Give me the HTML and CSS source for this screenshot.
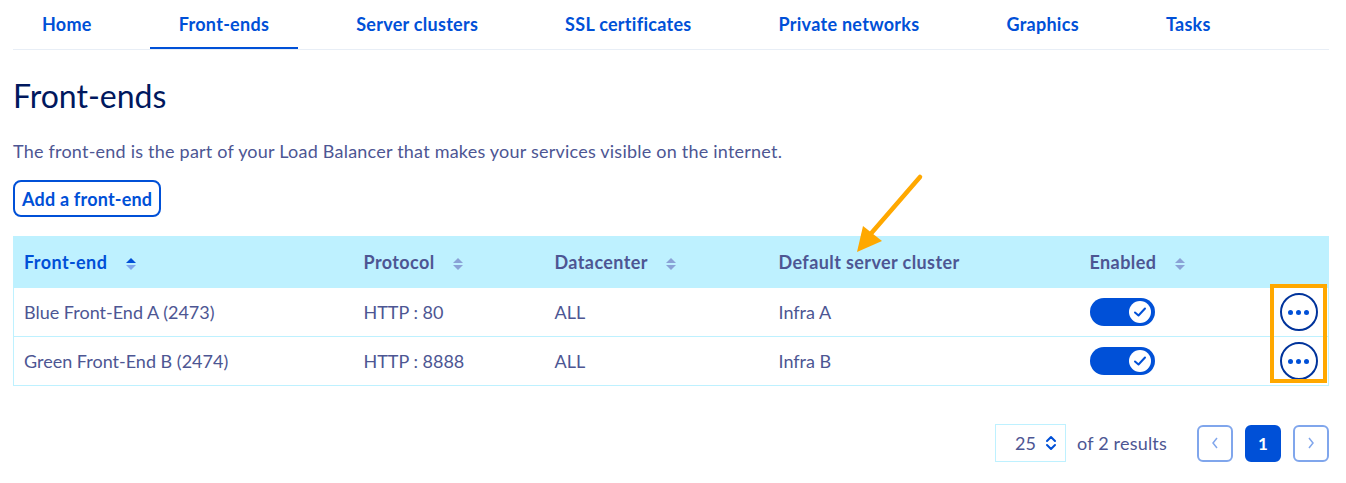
FILE: index.html
```html
<!DOCTYPE html>
<html lang="en">
<head>
  <meta charset="UTF-8" />
  <title>Front-ends</title>
  <link rel="stylesheet" href="styles.css">
</head>
<body>
  <div class="page">
    <!-- Tabs -->
    <nav class="tabs">
      <a class="tab">Home</a>
      <a class="tab active">Front-ends</a>
      <a class="tab">Server clusters</a>
      <a class="tab">SSL certificates</a>
      <a class="tab">Private networks</a>
      <a class="tab">Graphics</a>
      <a class="tab">Tasks</a>
    </nav>

    <h1 class="title">Front-ends</h1>
    <p class="intro">The front-end is the part of your Load Balancer that makes your services visible on the internet.</p>
    <button class="add-btn">Add a front-end</button>

    <!-- Table -->
    <div class="table-wrap">
      <table class="grid">
        <colgroup>
          <col style="width:340px"><col style="width:191px"><col style="width:224px">
          <col style="width:311px"><col style="width:189px"><col>
        </colgroup>
        <thead>
          <tr>
            <th class="sorted">Front-end <span class="sort"><i class="up"></i><i class="down"></i></span></th>
            <th>Protocol <span class="sort"><i class="up"></i><i class="down"></i></span></th>
            <th>Datacenter <span class="sort"><i class="up"></i><i class="down"></i></span></th>
            <th>Default server cluster</th>
            <th>Enabled <span class="sort"><i class="up"></i><i class="down"></i></span></th>
            <th></th>
          </tr>
        </thead>
        <tbody>
          <tr>
            <td>Blue Front-End A (2473)</td>
            <td>HTTP : 80</td>
            <td>ALL</td>
            <td>Infra A</td>
            <td><span class="toggle"><span class="knob"><svg width="14" height="12" viewBox="0 0 14 12"><path d="M2 6.5 L5.5 9.5 L12 2.5" fill="none" stroke="#0050d7" stroke-width="2" stroke-linecap="round" stroke-linejoin="round"/></svg></span></span></td>
            <td class="act"><span class="more"><i></i><i></i><i></i></span></td>
          </tr>
          <tr>
            <td>Green Front-End B (2474)</td>
            <td>HTTP : 8888</td>
            <td>ALL</td>
            <td>Infra B</td>
            <td><span class="toggle"><span class="knob"><svg width="14" height="12" viewBox="0 0 14 12"><path d="M2 6.5 L5.5 9.5 L12 2.5" fill="none" stroke="#0050d7" stroke-width="2" stroke-linecap="round" stroke-linejoin="round"/></svg></span></span></td>
            <td class="act"><span class="more"><i></i><i></i><i></i></span></td>
          </tr>
        </tbody>
      </table>
      <!-- annotations -->
      <div class="highlight"></div>
    </div>

    <!-- Pagination -->
    <div class="pager">
      <div class="per-page">25
        <svg width="12" height="16" viewBox="0 0 12 16"><path d="M2 6 L6 2 L10 6 M2 10 L6 14 L10 10" fill="none" stroke="#0050d7" stroke-width="2" stroke-linecap="round" stroke-linejoin="round"/></svg>
      </div>
      <span class="count">of 2 results</span>
      <div class="pages">
        <span class="pg"><svg width="8" height="12" viewBox="0 0 8 12"><path d="M6 1 L2 6 L6 11" fill="none" stroke="#80a6ec" stroke-width="1.5"/></svg></span>
        <span class="pg current">1</span>
        <span class="pg"><svg width="8" height="12" viewBox="0 0 8 12"><path d="M2 1 L6 6 L2 11" fill="none" stroke="#80a6ec" stroke-width="1.5"/></svg></span>
      </div>
    </div>
  </div>

  <svg class="arrow" width="100" height="100" viewBox="840 165 100 100">
    <line x1="920" y1="177" x2="868" y2="237" stroke="#ffa800" stroke-width="4.5" stroke-linecap="round"/>
    <polygon points="857,252 863,226 882,241" fill="#ffa800"/>
  </svg>
</body>
</html>
```

FILE: styles.css
```css
body {
  margin: 0;
  font-family: "Source Sans Pro", Lato, "Noto Sans", sans-serif;
  color: #4d5693;
  background: #fff;
}
.page {
  width: 1316px;
  padding-left: 13px;
}
/* Tabs */
.tabs {
  display: flex;
  gap: 29px;
  border-bottom: 1px solid #e8eef6;
  height: 49px;
}
.tab {
  padding: 0 29px;
  font-size: 18px;
  font-weight: 700;
  letter-spacing: 0.28px;
  color: #0050d7;
  line-height: 49px;
  height: 47px;
  border-bottom: 2px solid transparent;
}
.tab.active {
  border-bottom-color: #0050d7;
}
/* Heading */
.title {
  margin: 26px 0 0;
  font-size: 32px;
  font-weight: 400;
  color: #00185e;
  line-height: 40px;
}
.intro {
  margin: 23px 0 0;
  font-size: 18px;
  letter-spacing: 0.22px;
  line-height: 24px;
}
.add-btn {
  margin-top: 17px;
  height: 37px;
  padding: 0 7px;
  border: 2px solid #0050d7;
  border-radius: 8px;
  background: #fff;
  color: #0050d7;
  font: 700 18px "Source Sans Pro", Lato, "Noto Sans", sans-serif;
  letter-spacing: 0.2px;
}
/* Table */
.table-wrap {
  position: relative;
  margin-top: 19px;
}
.grid {
  width: 100%;
  border-collapse: collapse;
  table-layout: fixed;
  border: 1px solid #bef1ff;
  font-size: 18px;
}
.grid th {
  background: #bef1ff;
  height: 50px;
  text-align: left;
  padding: 0 0 0 10px;
  font-weight: 700;
  letter-spacing: 0.4px;
}
.grid th.sorted {
  color: #0050d7;
}
.grid td {
  height: 48px;
  padding: 0 0 0 10px;
  border-top: 1px solid #bef1ff;
}
.sort {
  display: inline-flex;
  flex-direction: column;
  gap: 2px;
  margin-left: 14px;
  vertical-align: middle;
}
.sort i {
  width: 0;
  height: 0;
  border-left: 5px solid transparent;
  border-right: 5px solid transparent;
}
.sort .up { border-bottom: 5px solid #8aa2d6; }
.sort .down { border-top: 5px solid #8aa2d6; }
.sorted .sort .up { border-bottom-color: #0050d7; }
.sorted .sort .down { border-top-color: #80a6ec; }
.toggle {
  display: flex;
  align-items: center;
  justify-content: flex-end;
  width: 65px;
  height: 28px;
  border-radius: 14px;
  background: #0050d7;
  padding-right: 4px;
  box-sizing: border-box;
}
.knob {
  width: 22px;
  height: 22px;
  border-radius: 50%;
  background: #fff;
  display: flex;
  align-items: center;
  justify-content: center;
}
.grid td.act {
  padding-left: 0;
}
.more {
  display: flex;
  align-items: center;
  justify-content: center;
  gap: 3px;
  width: 34px;
  height: 34px;
  border: 2px solid #00339b;
  border-radius: 50%;
  margin-left: 11px;
}
.more i {
  width: 5px;
  height: 5px;
  border-radius: 50%;
  background: #0050d7;
}
.highlight {
  position: absolute;
  left: 1257px;
  top: 48px;
  width: 49px;
  height: 91px;
  border: 4px solid #ffa800;
}
.arrow {
  position: absolute;
  left: 840px;
  top: 165px;
}
/* Pagination */
.pager {
  display: flex;
  justify-content: flex-end;
  align-items: center;
  margin-top: 38px;
}
.per-page {
  display: flex;
  align-items: center;
  justify-content: flex-end;
  gap: 9px;
  width: 71px;
  height: 38px;
  padding-right: 8px;
  box-sizing: border-box;
  border: 1px solid #bef1ff;
  font-size: 18px;
}
.count {
  margin-left: 11px;
  font-size: 18px;
  letter-spacing: 0.2px;
}
.pages {
  display: flex;
  gap: 12px;
  margin-left: 30px;
}
.pg {
  display: flex;
  align-items: center;
  justify-content: center;
  width: 36px;
  height: 37px;
  box-sizing: border-box;
  border: 2px solid #80a6ec;
  border-radius: 6px;
}
.pg.current {
  background: #0050d7;
  border-color: #0050d7;
  color: #fff;
  font-weight: 700;
  font-size: 17px;
}
```
